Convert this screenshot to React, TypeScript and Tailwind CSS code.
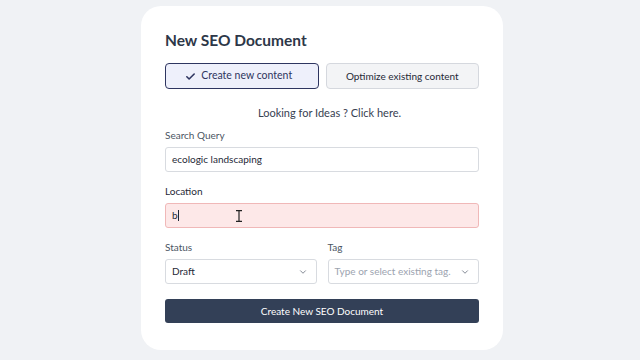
import React from "react";

const Chevron = () => (
  <svg width="10" height="10" viewBox="0 0 24 24" fill="none" stroke="#6b7280" strokeWidth="2" strokeLinecap="round" strokeLinejoin="round">
    <path d="M6 9l6 6 6-6" />
  </svg>
);

export default function App() {
  return (
    <div
      className="w-[640px] h-[360px] bg-[#f0f2f5] flex pl-[141px] pt-[6px]"
      style={{ fontFamily: 'Lato, "Noto Sans", sans-serif' }}
    >
      <div className="w-[362px] h-[344px] bg-white rounded-[20px] px-[24px] pt-[24px] flex flex-col">
        <h1 className="text-[15.5px] leading-[20px] font-bold text-[#2d3748]">New SEO Document</h1>
        <div className="grid grid-cols-2 gap-[7px] mt-[13px]">
          <button className="h-[26px] rounded-[4px] border border-[#2e3560] bg-[#eef0fb] text-[10.5px] text-[#2e3560] flex items-center justify-center gap-[5px] pr-[6px]">
            <svg width="11" height="11" viewBox="0 0 24 24" fill="none" stroke="#2e3560" strokeWidth="3.5" strokeLinecap="round" strokeLinejoin="round">
              <path d="M4 12.5l5 5L20 6.5" />
            </svg>
            Create new content
          </button>
          <button className="h-[26px] rounded-[4px] border border-[#d5d8de] bg-[#f3f4f6] text-[10px] text-[#1f2937] flex items-center justify-center">
            Optimize existing content
          </button>
        </div>
        <div className="text-center text-[11px] leading-[16px] text-[#374151] mt-[16px] pl-[15px]">Looking for Ideas ? Click here.</div>
        <label className="text-[10px] leading-[14px] text-[#4b5563] mt-[7px]">Search Query</label>
        <div className="mt-[5px] h-[25px] rounded-[3px] border border-[#d8dbe0] bg-white flex items-center px-[6px] text-[10px] text-[#1f2937]">
          ecologic landscaping
        </div>
        <label className="text-[10px] leading-[14px] text-[#1f2937] mt-[12px]">Location</label>
        <div className="relative mt-[5px] h-[25px] rounded-[3px] border border-[#f0b8b8] bg-[#fde8e8] flex items-center px-[6px] text-[10px] text-[#1f2937]">
          <span>b</span>
          <span className="w-px h-[11px] bg-[#1f2937]"></span>
          <svg className="absolute left-[69px] top-[6px]" width="8" height="12" viewBox="0 0 8 12" fill="none" stroke="#222" strokeWidth="1.2">
            <path d="M1 0.6h6M1 11.4h6M4 0.6v10.8" />
          </svg>
        </div>
        <div className="grid grid-cols-2 gap-[11px] mt-[12px]">
          <div className="flex flex-col">
            <label className="text-[10px] leading-[14px] text-[#4b5563]">Status</label>
            <div className="mt-[5px] h-[25px] rounded-[3px] border border-[#d8dbe0] bg-white flex items-center justify-between px-[6px] pr-[8px] text-[10px] text-[#1f2937]">
              <span>Draft</span>
              <Chevron />
            </div>
          </div>
          <div className="flex flex-col">
            <label className="text-[10px] leading-[14px] text-[#4b5563]">Tag</label>
            <div className="mt-[5px] h-[25px] rounded-[3px] border border-[#d8dbe0] bg-white flex items-center justify-between px-[6px] pr-[8px] text-[10px] text-[#9ca3af]">
              <span>Type or select existing tag.</span>
              <Chevron />
            </div>
          </div>
        </div>
        <button className="mt-[15px] h-[24px] rounded-[3px] bg-[#334057] text-white text-[10px] flex items-center justify-center">
          Create New SEO Document
        </button>
      </div>
    </div>
  );
}
